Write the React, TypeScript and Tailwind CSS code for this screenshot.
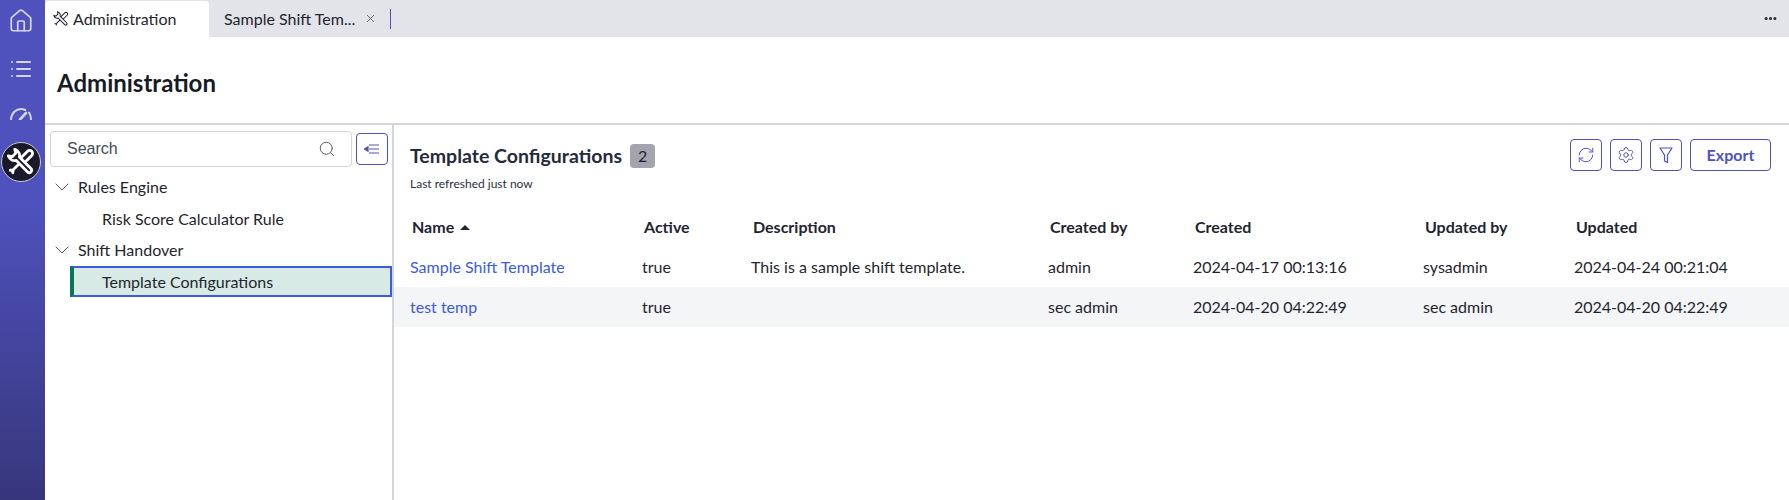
import React from 'react';
import { House, List, Search, X, Settings, RefreshCw, ChevronDown, Ellipsis } from 'lucide-react';

const columns = ['Name', 'Active', 'Description', 'Created by', 'Created', 'Updated by', 'Updated'];

const rows = [
  ['Sample Shift Template', 'true', 'This is a sample shift template.', 'admin', '2024-04-17 00:13:16', 'sysadmin', '2024-04-24 00:21:04'],
  ['test temp', 'true', '', 'sec admin', '2024-04-20 04:22:49', 'sec admin', '2024-04-20 04:22:49'],
];

const gridCols = 'grid grid-cols-[232px_109px_297px_145px_230px_151px_1fr]';

// crossed screwdriver and wrench, the body of the wrench is filled so it hides the shaft behind it
const ToolsIcon: React.FC<{ size: number; strokeWidth: number; fill: string }> = ({ size, strokeWidth, fill }) => (
  <svg width={size} height={size} viewBox="0 0 24 24" fill="none" stroke="currentColor" strokeWidth={strokeWidth} strokeLinejoin="round" strokeLinecap="round">
    <g transform="rotate(45 12 12)">
      <path d="M9.500 1.500a2.500 2.500 0 0 1 5 0V11h-5z" />
      <path d="M12 11v10.500l-1.500 2M12 21.500l1.500 2" />
    </g>
    <g transform="rotate(-45 12 12)">
      <path fill={fill} d="M8 0.500C6.500 4 8 7 10 8v14a2 2 0 0 0 4 0V8c2-1 3.500-4 2-7.500L14 3.500h-4z" />
    </g>
  </svg>
);

const IconButton: React.FC<{ children: React.ReactNode }> = ({ children }) => (
  <button className="w-[32px] h-[32px] flex items-center justify-center rounded border border-[#4f52bd] text-[#4f52bd] bg-white">
    {children}
  </button>
);

const Sidebar = () => (
  <div className="w-[45px] shrink-0 h-[500px] bg-gradient-to-b from-[#4f52bd] from-40% to-[#37367c] flex flex-col items-center">
    <House className="mt-[8px] ml-[-3px] text-[#d4d5e8]" size={26} strokeWidth={1.6} />
    <List className="mt-[23px] ml-[-3px] text-[#d4d5e8]" size={24} strokeWidth={2} />
    <svg className="mt-[26px] ml-[-3px] text-[#d4d5e8]" width="24" height="13" viewBox="0 0 24 13" fill="none" stroke="currentColor" strokeWidth="2" strokeLinecap="round">
      <path d="M2 12.500C2.500 6 7 2 12 2c1.500 0 3 .4 4.200 1" />
      <path d="M20 5.500c1.300 1.800 2 4.200 2 7" />
      <path d="M11 12.500l6-6.500" strokeWidth="2.600" />
    </svg>
    <div className="mt-[22px] ml-[-3px] w-[40px] h-[40px] rounded-full bg-[#1b1a2b] border border-[#c9c9d6] flex items-center justify-center text-white">
      <ToolsIcon size={28} strokeWidth={2.4} fill="#1b1a2b" />
    </div>
  </div>
);

const Tabs = () => (
  <div className="h-[37px] bg-[#e3e4e9] flex items-stretch text-[#1f2530] text-[16px]">
    <div className="w-[164px] mt-[1px] bg-white rounded-t flex items-center pl-[8px] gap-[4px]">
      <ToolsIcon size={16} strokeWidth={1.5} fill="#ffffff" />
      <span>Administration</span>
    </div>
    <div className="flex items-center pl-[15px]">
      <span>Sample Shift Tem...</span>
      <X className="ml-[9px] text-[#444b57]" size={13} strokeWidth={1.5} />
      <div className="ml-[13px] w-px h-[20px] bg-[#4f52bd]" />
    </div>
    <Ellipsis className="ml-auto mr-[11px] self-center" size={15} strokeWidth={3} />
  </div>
);

const TreePane = () => (
  <div className="w-[349px] shrink-0 border-r-2 border-[#d3d5dc] pt-[6px]">
    <div className="flex items-start pl-[5px]">
      <div className="w-[302px] h-[36px] rounded border border-[#d3d5dc] flex items-center pl-[16px] pr-[15px] justify-between">
        <span className="text-[16px] text-[#434b5b] font-['Liberation_Sans',sans-serif]">Search</span>
        <Search className="text-[#555c68]" size={18} strokeWidth={1.3} />
      </div>
      <div className="ml-[4px] mt-[2px]">
        <IconButton>
          <svg width="16" height="10" viewBox="0 0 16 10" fill="none" stroke="currentColor" strokeWidth="1.200">
            <path d="M0.500 5L4 2.800v4.400z" fill="currentColor" />
            <path d="M5 1h10M5 5h10M5 9h10" />
          </svg>
        </IconButton>
      </div>
    </div>
    <div className="mt-[4px] text-[16px] text-[#1f2530]">
      <div className="h-[32px] flex items-center pl-[5px]">
        <ChevronDown className="text-[#555c68]" size={24} strokeWidth={1} />
        <span className="ml-[4px]">Rules Engine</span>
      </div>
      <div className="h-[31px] flex items-center pl-[57px]">Risk Score Calculator Rule</div>
      <div className="h-[32px] flex items-center pl-[5px]">
        <ChevronDown className="text-[#555c68]" size={24} strokeWidth={1} />
        <span className="ml-[4px]">Shift Handover</span>
      </div>
      <div className="ml-[25px] h-[31px] flex items-center bg-[#d8eae5] border-2 border-[#3d5ae0] border-l-4 border-l-[#047857] pl-[28px]">
        Template Configurations
      </div>
    </div>
  </div>
);

const TablePane = () => (
  <div className="flex-1 min-w-0">
    <div className="flex items-start justify-between pl-[16px] pr-[18px] pt-[14px]">
      <div>
        <div className="flex items-center h-[25px] mt-[4px]">
          <span className="text-[19.500px] font-bold text-[#252b3a]">Template Configurations</span>
          <span className="ml-[8px] w-[25px] h-[24px] rounded-sm bg-[#a3a4ae] flex items-center justify-center text-[16px] text-[#1f2530]">2</span>
        </div>
        <div className="mt-[7px] text-[12px] text-[#2b303b]">Last refreshed just now</div>
      </div>
      <div className="flex gap-[8px]">
        <IconButton><RefreshCw size={18} strokeWidth={1.300} /></IconButton>
        <IconButton><Settings size={18} strokeWidth={1.300} /></IconButton>
        <IconButton>
          <svg width="14" height="17" viewBox="0 0 14 17" fill="none" stroke="currentColor" strokeWidth="1.200" strokeLinejoin="round">
            <path d="M1 1h12L8.500 8v7.500l-3-1.500V8z" />
          </svg>
        </IconButton>
        <button className="w-[81px] h-[32px] rounded border border-[#4f52bd] text-[#4f52bd] text-[16px] font-bold">Export</button>
      </div>
    </div>
    <div className={`${gridCols} mt-[14px] h-[40px] items-center pl-[18px] text-[16px] font-bold text-[#1f2530]`}>
      {columns.map((c) => (
        <div key={c} className="flex items-center gap-[6px]">
          {c}
          {c === 'Name' && <span className="w-0 h-0 border-x-[5px] border-x-transparent border-b-[5px] border-b-[#1f2530]" />}
        </div>
      ))}
    </div>
    {rows.map((row, i) => (
      <div key={row[0]} className={`${gridCols} h-[40px] items-center pl-[16px] text-[16px] text-[#1f2530] ${i === 1 ? 'bg-[#f4f5f7]' : ''}`}>
        {row.map((cell, j) => (
          <div key={j} className={j === 0 ? 'text-[#3d5ae0]' : ''}>{cell}</div>
        ))}
      </div>
    ))}
  </div>
);

export default function App() {
  return (
    <div className="flex h-[500px] overflow-hidden bg-white font-['Lato',sans-serif]">
      <Sidebar />
      <div className="flex-1 min-w-0 flex flex-col">
        <Tabs />
        <div className="h-[86px] shrink-0 flex items-center pl-[12px] pt-[6px] text-[24px] font-bold text-[#161b26]">Administration</div>
        <div className="flex-1 flex border-t-2 border-[#d3d5dc]">
          <TreePane />
          <TablePane />
        </div>
      </div>
    </div>
  );
}
